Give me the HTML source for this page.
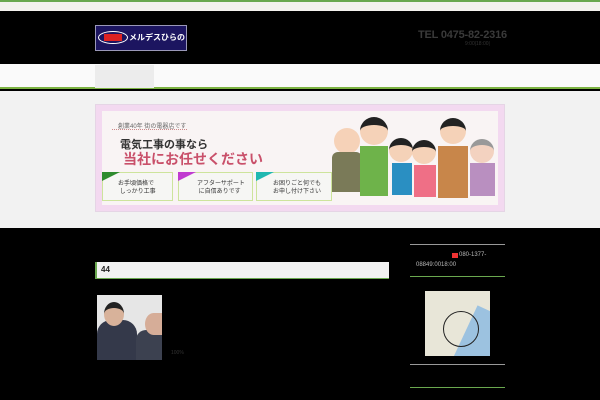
<!DOCTYPE html>
<html><head><meta charset="utf-8"><style>
*{margin:0;padding:0;box-sizing:border-box}
body{width:600px;height:400px;overflow:hidden;background:#000;font-family:"Liberation Sans","Noto Sans CJK JP",sans-serif;position:relative}
.a{position:absolute;white-space:nowrap}
</style></head><body>
<div class="a" style="left:0;top:0;width:600px;height:11px;background:#f4f2ee;border-top:2px solid #6aa84f"></div>
<div class="a" style="left:0;top:11px;width:600px;height:53px;background:#000"></div>
<div class="a" style="left:95px;top:25px;width:92px;height:26px;background:#1c1560;border:1px solid #9a98b8;color:#fff;font-size:8px;font-weight:bold;line-height:24px;padding-left:33px;overflow:hidden">メルデスひらの</div>
<div class="a" style="left:98px;top:31px;width:30px;height:13px;border:1px solid #fff;border-radius:50%;background:#1c1560"><div style="margin:2px 5px;height:7px;background:#d22"></div></div>
<div class="a" style="left:418px;top:29px;color:#3a3a3a;font-size:11px;font-weight:bold;letter-spacing:-0.2px">TEL 0475-82-2316</div>
<div class="a" style="left:465px;top:41px;color:#333;font-size:5px">9:00|18:00|</div>
<div class="a" style="left:0;top:64px;width:600px;height:25px;background:#fafafa;border-bottom:2px solid #7cb342"></div>
<div class="a" style="left:95px;top:65px;width:59px;height:23px;background:#ececec"></div>
<div class="a" style="left:0;top:91px;width:600px;height:137px;background:#f2f2f2"></div>
<div class="a" style="left:95px;top:104px;width:410px;height:108px;background:#f3d9f0;border:1px solid #e5d5e5"></div>
<div class="a" style="left:102px;top:111px;width:396px;height:94px;background:#f9f4f4"></div>
<div class="a" style="left:118px;top:121px;font-size:6px;color:#666">創業40年 街の電器店です</div>
<div class="a" style="left:112px;top:129px;width:75px;border-top:1px dotted #c88"></div>
<div class="a" style="left:120px;top:136px;font-size:11px;font-weight:bold;color:#333">電気工事の事なら</div>
<div class="a" style="left:123px;top:149px;font-size:14px;font-weight:bold;color:#c9506a">当社にお任せください</div>
<div class="a" style="left:102px;top:172px;width:71px;height:29px;background:#f6f6f4;border:1px solid #cde49c;font-size:6px;line-height:8px;color:#333;padding:7px 0 0 15px">お手頃価格で<br>&nbsp;しっかり工事</div>
<div class="a" style="left:178px;top:172px;width:75px;height:29px;background:#f6f6f4;border:1px solid #cde49c;font-size:6px;line-height:8px;color:#333;padding:7px 0 0 18px">アフターサポート<br>&nbsp;に自信ありです</div>
<div class="a" style="left:256px;top:172px;width:76px;height:29px;background:#f6f6f4;border:1px solid #cde49c;font-size:6px;line-height:8px;color:#333;padding:7px 0 0 16px">お困りごと何でも<br>お申し付け下さい</div>
<div class="a" style="left:102px;top:172px;width:0;height:0;border-top:9px solid #2e8b2e;border-right:18px solid transparent"></div>
<div class="a" style="left:178px;top:172px;width:0;height:0;border-top:9px solid #c03ad0;border-right:18px solid transparent"></div>
<div class="a" style="left:256px;top:172px;width:0;height:0;border-top:9px solid #20b8b0;border-right:18px solid transparent"></div>
<div class="a" style="left:334px;top:128px;width:26px;height:26px;border-radius:50%;background:#f6d2b8"></div>
<div class="a" style="left:332px;top:152px;width:30px;height:40px;background:#7a7a58;border-radius:6px 6px 0 0"></div>
<div class="a" style="left:360px;top:117px;width:28px;height:28px;border-radius:50%;background:#f5d2b8;border-top:8px solid #222"></div>
<div class="a" style="left:360px;top:146px;width:28px;height:50px;background:#6eb34a"></div>
<div class="a" style="left:389px;top:138px;width:24px;height:24px;border-radius:50%;background:#f5d2b8;border-top:7px solid #222"></div>
<div class="a" style="left:392px;top:163px;width:20px;height:32px;background:#2a8fc2"></div>
<div class="a" style="left:412px;top:140px;width:24px;height:24px;border-radius:50%;background:#f5d2b8;border-top:7px solid #222"></div>
<div class="a" style="left:414px;top:165px;width:22px;height:32px;background:#ef6f86"></div>
<div class="a" style="left:440px;top:118px;width:26px;height:26px;border-radius:50%;background:#f5d2b8;border-top:8px solid #222"></div>
<div class="a" style="left:438px;top:146px;width:30px;height:52px;background:#c8864a"></div>
<div class="a" style="left:470px;top:139px;width:24px;height:24px;border-radius:50%;background:#f3d2c0;border-top:6px solid #999"></div>
<div class="a" style="left:470px;top:163px;width:25px;height:33px;background:#b98fc0"></div>
<div class="a" style="left:95px;top:262px;width:294px;height:17px;background:#f2f2f2;border-left:2px solid #6aa84f;border-bottom:1px solid #6aa84f;font-size:8px;font-weight:bold;line-height:16px;padding-left:4px;color:#222">44</div>
<div class="a" style="left:97px;top:295px;width:65px;height:65px;background:#e6e6e6"></div>
<div class="a" style="left:97px;top:320px;width:40px;height:40px;background:#34394a;border-radius:14px 14px 0 0"></div>
<div class="a" style="left:104px;top:302px;width:20px;height:24px;border-radius:50%;background:#d8b29a;border-top:6px solid #222"></div>
<div class="a" style="left:136px;top:330px;width:26px;height:30px;background:#3c4150;border-radius:10px 0 0 0"></div>
<div class="a" style="left:145px;top:313px;width:17px;height:22px;border-radius:50% 0 0 50%;background:#d6ad98"></div>
<div class="a" style="left:171px;top:350px;font-size:5px;color:#333">100%</div>
<div class="a" style="left:410px;top:244px;width:95px;border-top:1px solid #999"></div>
<div class="a" style="left:452px;top:253px;width:6px;height:5px;background:#e33"></div>
<div class="a" style="left:459px;top:252px;font-size:6px;color:#bbb">080-1377-</div>
<div class="a" style="left:416px;top:262px;font-size:6px;color:#bbb">08849:0018:00</div>
<div class="a" style="left:410px;top:276px;width:95px;border-top:1px solid #6aa84f"></div>
<div class="a" style="left:425px;top:291px;width:65px;height:65px;background:#e8e6d8;overflow:hidden">
<div class="a" style="left:38px;top:20px;width:40px;height:60px;background:#9cc2e0;transform:rotate(25deg)"></div>
<div class="a" style="left:18px;top:20px;width:36px;height:36px;border:1px solid #222;border-radius:50%"></div></div>
<div class="a" style="left:410px;top:364px;width:95px;border-top:1px solid #999"></div>
<div class="a" style="left:410px;top:387px;width:95px;border-top:1px solid #6aa84f"></div>
</body></html>
